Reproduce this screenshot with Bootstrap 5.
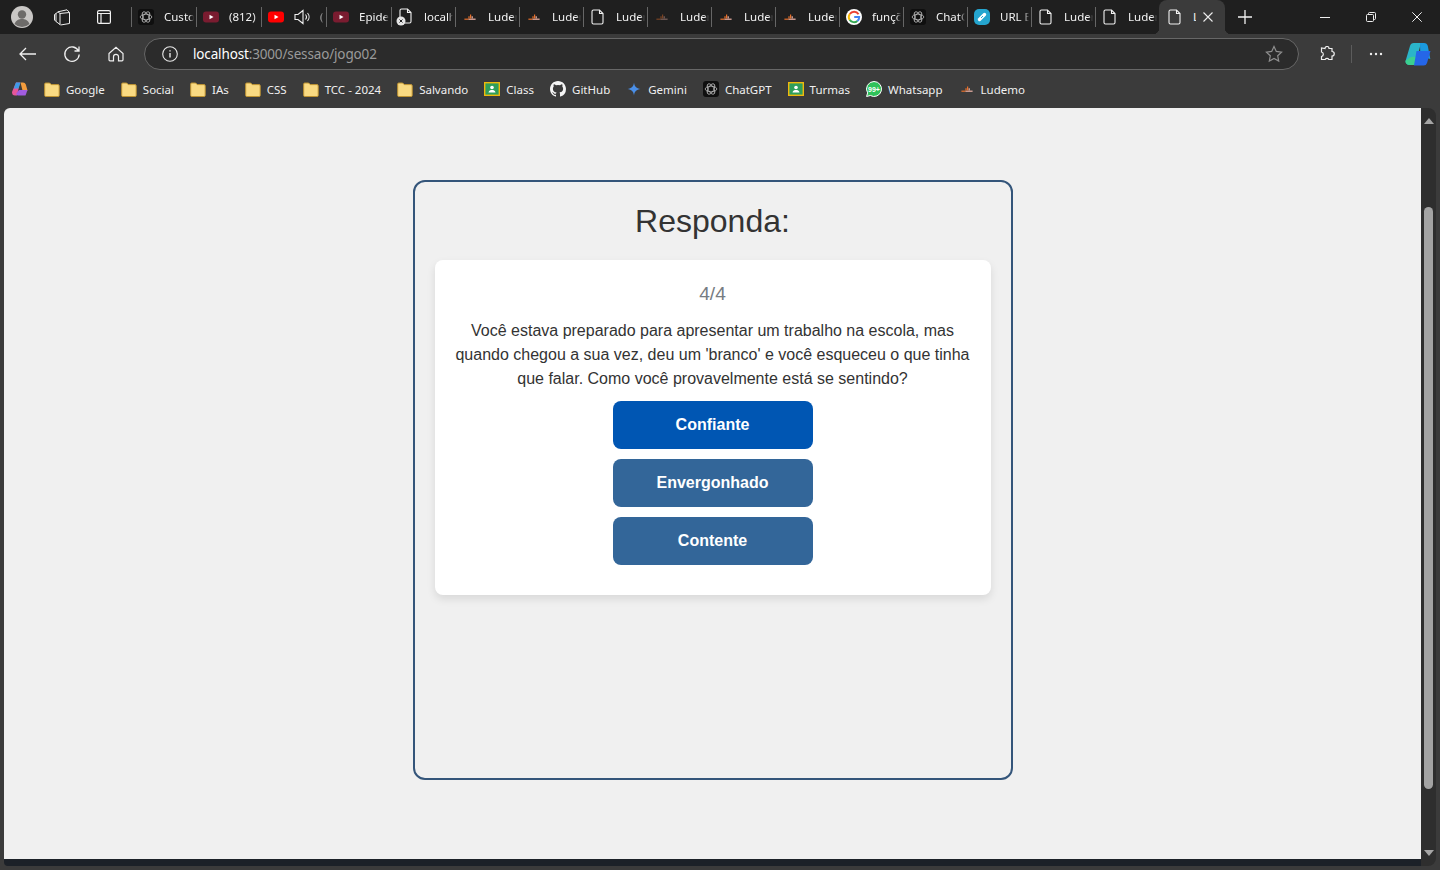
<!DOCTYPE html>
<html lang="pt-BR">
<head>
<meta charset="UTF-8">
<meta name="viewport" content="width=device-width, initial-scale=1.0">
<link href="https://cdn.jsdelivr.net/npm/bootstrap@5.3.3/dist/css/bootstrap.min.css" rel="stylesheet">
<title>localhost:3000/sessao/jogo02</title>
<style>
  html, body { height: 100%; }
  body { background: #3b3b3b; overflow: hidden; font-family: "Liberation Sans", Arial, sans-serif; }
  .uiwrap { height: 870px; }

  /* browser chrome */
  .tabstrip { height: 34px; background: #1f1f1f; color: #f2f2f2; font: 11.5px "Noto Sans", sans-serif; }
  .ctl-left { width: 131px; padding-left: 11px; }
  .avatar { width: 22px; height: 22px; }
  .ic-collect { margin-left: 20px; }
  .ic-tabs { margin-left: 26px; }
  .tabcell { width: 64px; height: 34px; padding-left: 7px; padding-right: 1px; gap: 10px; border-right: 1px solid transparent; position: relative; }
  .tabcell.wide { width: 65px; }
  .tabcell::after { content: ""; position: absolute; right: -2px; top: 7px; height: 20px; width: 1px; background: #666; }
  .tabcell.first::before { content: ""; position: absolute; left: 0; top: 7px; height: 20px; width: 1px; background: #666; }
  .tabcell.noline::after { display: none; }
  .tabcell svg { flex: none; }
  .tabname { overflow: hidden; white-space: nowrap; min-width: 0; flex: 1 1 0; padding-bottom: 2px; -webkit-mask-image: linear-gradient(to right, #000 calc(100% - 5px), transparent); mask-image: linear-gradient(to right, #000 calc(100% - 5px), transparent); }
  .ic-badged { margin-left: -2px; }
  .tabcell-on { width: 66px; height: 34px; background: #3b3b3b; border-radius: 8px 8px 0 0; padding-left: 8px; gap: 10px; position: relative; }
  .tabcell-on::before, .tabcell-on::after { content: ""; position: absolute; bottom: 0; width: 6px; height: 6px; }
  .tabcell-on::before { left: -6px; background: radial-gradient(circle at 0 0, transparent 6px, #3b3b3b 6.500px); }
  .tabcell-on::after { right: -6px; background: radial-gradient(circle at 100% 0, transparent 6px, #3b3b3b 6.500px); }
  .tab-cut { width: 3px; overflow: hidden; padding-bottom: 2px; }
  .ic-close { margin-left: -3px; }
  .ic-plus { margin-left: 13px; }
  .winctl { width: 46px; }

  .toolbar { height: 38px; padding-top: 2px; background: #3b3b3b; }
  .navbtn { width: 44px; }
  .navbtn.lead-btn { margin-left: 6px; }
  .addr { height: 32px; width: 1155px; margin-left: 6px; background: #2b2b2b; border: 1px solid #676767; border-radius: 16px; padding: 0 15px 0 17px; font: 13.5px "Noto Sans", sans-serif; letter-spacing: -.15px; color: #9a9a9a; }
  .addr b { font-weight: 400; color: #fff; }
  .addr-url { margin-left: 15px; }
  .ic-ext { margin-left: 20px; }
  .tool-sep { width: 1px; height: 18px; margin-left: 16px; background: #5c5c5c; }
  .ic-dots { margin-left: 17px; }
  .ic-copilot { margin-left: 22px; }

  .bookbar { height: 36px; background: #3b3b3b; padding: 0 0 2px 12px; gap: 16px; color: #f0f0f0; font: 11.5px "Noto Sans", sans-serif; }
  .bookmk { gap: 6px; white-space: nowrap; }

  /* viewport */
  .vwrap { height: 758px; }
  .pagearea { width: 1417px; height: 751px; margin-left: 4px; background: #f0f0f0; border-top-left-radius: 6px; overflow: hidden; }
  .sbar { width: 15px; height: 758px; background: #2e2e2e; padding: 10px 0; border-radius: 0 8px 8px 0; }
  .sbar-arrow-up { width: 0; height: 0; border-left: 5px solid transparent; border-right: 5px solid transparent; border-bottom: 6px solid #a6a6a6; }
  .sbar-arrow-dn { width: 0; height: 0; border-left: 5px solid transparent; border-right: 5px solid transparent; border-top: 6px solid #a6a6a6; }
  .sbar-thumb { width: 9px; height: 582px; margin-top: 83px; margin-bottom: auto; background: #a3a3a3; border-radius: 5px; }
  .pagefoot { height: 7px; width: 1417px; margin-left: 4px; background: #1c2128; border-bottom-left-radius: 4px; }

  /* quiz */
  .jogo-box { width: 600px; height: 600px; margin: 72px 0 0 409px; border: 2px solid #34557a; border-radius: 12px; padding: 20px; color: #333; }
  .jogo-title { font-size: 32px; font-weight: 400; line-height: 38px; margin: 0 0 20px; padding-right: 1px; }
  .jogo-card { height: 335px; padding: 20px 21px 20px 20px; background: #fff; border: 0; border-radius: 8px; box-shadow: 0 4px 8px rgba(0,0,0,.1); }
  .jogo-count { font-size: 19.2px; line-height: 26px; padding-top: 1px; color: #777c82; margin-bottom: 12px; }
  .jogo-text { font-size: 16px; line-height: 24px; margin-bottom: 10px; }
  .resp-list { gap: 10px; margin-right: -1px; }
  .resp-btn { width: 200px; height: 48px; padding: 0 1px 0 0; border: 0; border-radius: 8px; color: #fff; font-size: 16px; font-weight: 700; background: #336699; }
  .resp-btn:hover { background: #336699; color: #fff; }
  .resp-btn.ativo, .resp-btn.ativo:hover { background: #0056b3; }
</style>
</head>
<body>
<svg width="0" height="0" class="d-block">
  <defs>
    <symbol id="i-file" viewBox="0 0 16 16"><path d="M3.500 1h6l3.500 3.500v9a1.500 1.500 0 0 1-1.500 1.500h-8a1.500 1.500 0 0 1-1.500-1.500v-11a1.500 1.500 0 0 1 1.500-1.500zM9.500 1v3.500h3.500" fill="none" stroke="#f2f2f2" stroke-width="1.100"/></symbol>
    <symbol id="i-folder" viewBox="0 0 16 16"><path d="M.7 3a1 1 0 0 1 1-1h4l1.500 1.600h6.800a1.200 1.200 0 0 1 1.200 1.200v9.700a1 1 0 0 1-1 1h-12.500a1 1 0 0 1-1-1z" fill="#f9da82" stroke="#bd9230"/></symbol>
    <symbol id="i-ludemo" viewBox="-2 -2 20 20"><path d="M1 10h5v1.500H1z" fill="#e8702a"/><path d="M6 10h9v1.500H6z" fill="#efb4a8"/><path d="M6 7h1.500v3H6zM8 5h1.500v5H8z" fill="#e8702a"/><path d="M10 7h1.500v3H10z" fill="#efb4a8"/></symbol>
    <symbol id="i-yt" viewBox="0 0 16 16"><rect y="2.500" width="16" height="11" rx="3" fill="currentColor"/><path d="M6.500 5.700v4.600L10.500 8z" fill="#fff"/></symbol>
    <symbol id="i-gpt" viewBox="0 0 16 16"><rect width="16" height="16" rx="3" fill="#0f0f0f"/><g fill="none" stroke="#bdbdbd" stroke-width=".8"><ellipse cx="8" cy="8" rx="5.800" ry="2.800"/><ellipse cx="8" cy="8" rx="5.800" ry="2.800" transform="rotate(60 8 8)"/><ellipse cx="8" cy="8" rx="5.800" ry="2.800" transform="rotate(120 8 8)"/></g></symbol>
    <symbol id="i-class" viewBox="0 0 16 16"><rect x=".7" y="1.700" width="14.600" height="12.600" fill="#2f9e5b" stroke="#f0b90b" stroke-width="1.400"/><circle cx="8" cy="6.500" r="1.800" fill="#fff"/><path d="M4.500 11.500c.4-2 2-2.500 3.500-2.500s3.100.5 3.500 2.500z" fill="#fff"/></symbol>
    <symbol id="i-copilot" viewBox="0 0 16 16"><path d="M4 1.500h4l-3 13H3a3 3 0 0 1-2.800-4z" fill="#e7569a"/><path d="M4 1.500h4.500l-2 6H1.800z" fill="#3d9be8"/><path d="M8.500 1.500H11a3 3 0 0 1 2.800 2l1.700 6h-5z" fill="#f39c3d"/><path d="M7 9h8.500l-2 5.500H6a2 2 0 0 1-1.800-2z" fill="#a25ce0"/></symbol>
  </defs>
</svg>

<div class="uiwrap d-flex flex-column">

  <!-- tabs -->
  <div class="tabstrip d-flex align-items-center">
    <div class="ctl-left d-flex align-items-center">
      <svg class="avatar" viewBox="0 0 22 22"><circle cx="11" cy="11" r="11" fill="#c9c7c5"/><circle cx="11" cy="8.500" r="4.200" fill="#6d6b69"/><path d="M3.500 18c1.500-4 4.500-5 7.500-5s6 1 7.500 5a11 11 0 0 1-15 0z" fill="#6d6b69"/></svg>
      <svg class="ic-collect" width="18" height="18" viewBox="0 0 18 18" fill="none" stroke="#ededed" stroke-width="1"><path d="M7 5.500l9.500-1v11l-9 1.500-.5-.5z"/><path d="M7 5.500L5 3.800l9-2 2.500 2.700"/><path d="M5 3.800L3 5.500v8l4 3"/><path d="M3 5.500L1.500 6.500v5.500l1.500 1.500"/></svg>
      <svg class="ic-tabs" width="14" height="14" viewBox="0 0 14 14" fill="none" stroke="#f2f2f2" stroke-width="1.200"><rect x=".6" y=".6" width="12.800" height="12.800" rx="1.500"/><path d="M.6 3.500h12.800M4 3.500v9.900"/></svg>
    </div>
    <div class="tabcell wide first d-flex align-items-center"><svg width="16" height="16"><use href="#i-gpt"/></svg><span class="tabname">Custom GPT</span></div>
    <div class="tabcell wide d-flex align-items-center"><svg width="16" height="16" color="#7a1c30"><use href="#i-yt"/></svg><span class="tabname">(812) O melhor</span></div>
    <div class="tabcell wide d-flex align-items-center"><svg width="16" height="16" color="#f00"><use href="#i-yt"/></svg><svg width="16" height="16" viewBox="0 0 16 16" fill="none" stroke="#f0f0f0" stroke-width="1.100"><path d="M1 5.500h3l5-4v13l-5-4H1zM11.500 5.500a4 4 0 0 1 0 5M13.500 4a6 6 0 0 1 0 8"/></svg><span class="tabname">(812)</span></div>
    <div class="tabcell wide d-flex align-items-center"><svg width="16" height="16" color="#7a1c30"><use href="#i-yt"/></svg><span class="tabname">Epidemia</span></div>
    <div class="tabcell d-flex align-items-center"><svg class="ic-badged" width="18" height="18" viewBox="0 0 18 18"><use href="#i-file" width="16" height="16" x="2" y="0"/><circle cx="5" cy="13" r="4.500" fill="#e6e6e6"/><path d="M3.500 11.500l3 3m0-3l-3 3" stroke="#222" stroke-width="1"/></svg><span class="tabname">localhost</span></div>
    <div class="tabcell d-flex align-items-center"><svg width="16" height="16"><use href="#i-ludemo"/></svg><span class="tabname">Ludemo</span></div>
    <div class="tabcell d-flex align-items-center"><svg width="16" height="16"><use href="#i-ludemo"/></svg><span class="tabname">Ludemo</span></div>
    <div class="tabcell d-flex align-items-center"><svg width="16" height="16"><use href="#i-file"/></svg><span class="tabname">Ludemo</span></div>
    <div class="tabcell d-flex align-items-center"><svg width="16" height="16" opacity=".45"><use href="#i-ludemo"/></svg><span class="tabname">Ludemo</span></div>
    <div class="tabcell d-flex align-items-center"><svg width="16" height="16"><use href="#i-ludemo"/></svg><span class="tabname">Ludemo</span></div>
    <div class="tabcell d-flex align-items-center"><svg width="16" height="16"><use href="#i-ludemo"/></svg><span class="tabname">Ludemo</span></div>
    <div class="tabcell d-flex align-items-center"><svg width="16" height="16" viewBox="0 0 16 16"><circle cx="8" cy="8" r="8" fill="#fff"/><path d="M12.500 5.200A5.200 5.200 0 0 0 3.800 5" fill="none" stroke="#ea4335" stroke-width="2"/><path d="M3.800 5a5.200 5.200 0 0 0-.1 5.900" fill="none" stroke="#fbbc05" stroke-width="2"/><path d="M3.700 10.900a5.200 5.200 0 0 0 7.700 1" fill="none" stroke="#34a853" stroke-width="2"/><path d="M11.400 11.900A5 5 0 0 0 13.200 8H8.200" fill="none" stroke="#4285f4" stroke-width="2"/></svg><span class="tabname">funções</span></div>
    <div class="tabcell d-flex align-items-center"><svg width="16" height="16"><use href="#i-gpt"/></svg><span class="tabname">ChatGPT</span></div>
    <div class="tabcell d-flex align-items-center"><svg width="16" height="16" viewBox="0 0 16 16"><rect width="16" height="16" rx="5" fill="#25a5cf"/><path d="M5.500 10.500l5-5" stroke="#fff" stroke-width="3.400" stroke-linecap="round"/><path d="M7 9l2-2" stroke="#25a5cf" stroke-width="1"/></svg><span class="tabname">URL Encode</span></div>
    <div class="tabcell d-flex align-items-center"><svg width="16" height="16"><use href="#i-file"/></svg><span class="tabname">Ludemo</span></div>
    <div class="tabcell noline d-flex align-items-center"><svg width="16" height="16"><use href="#i-file"/></svg><span class="tabname">Ludemo</span></div>
    <div class="tabcell-on d-flex align-items-center">
      <svg width="16" height="16"><use href="#i-file"/></svg>
      <span class="tab-cut">L</span>
      <svg class="ic-close" width="10" height="10" viewBox="0 0 10 10" stroke="#ededed" stroke-width="1.100"><path d="M.5.500l9 9m0-9l-9 9"/></svg>
    </div>
    <svg class="ic-plus" width="14" height="14" viewBox="0 0 14 14" stroke="#f2f2f2" stroke-width="1.300"><path d="M7 0v14M0 7h14"/></svg>
    <div class="ms-auto d-flex">
      <div class="winctl d-flex justify-content-center align-items-center"><svg width="10" height="10" viewBox="0 0 10 10" stroke="#eee"><path d="M0 5.500h10"/></svg></div>
      <div class="winctl d-flex justify-content-center align-items-center"><svg width="10" height="10" viewBox="0 0 10 10" fill="none" stroke="#eee"><rect x=".5" y="2.500" width="7" height="7" rx="1"/><path d="M2.500 2.500v-1a1 1 0 0 1 1-1h5a1 1 0 0 1 1 1v5a1 1 0 0 1-1 1h-1"/></svg></div>
      <div class="winctl d-flex justify-content-center align-items-center"><svg width="10" height="10" viewBox="0 0 10 10" stroke="#eee"><path d="M.3.300l9.400 9.400m0-9.400L.3 9.700"/></svg></div>
    </div>
  </div>

  <!-- address row -->
  <div class="toolbar d-flex align-items-center">
    <div class="navbtn lead-btn d-flex justify-content-center"><svg width="18" height="14" viewBox="0 0 18 14" fill="none" stroke="#f0f0f0" stroke-width="1.300"><path d="M17 7H1M7 1L1 7l6 6"/></svg></div>
    <div class="navbtn d-flex justify-content-center"><svg width="18" height="18" viewBox="0 0 18 18" fill="none" stroke="#f0f0f0" stroke-width="1.300"><path d="M15.500 6A7.200 7.200 0 1 0 16.200 9.500M16 1.500V6h-4.500"/></svg></div>
    <div class="navbtn d-flex justify-content-center"><svg width="16" height="16" viewBox="0 0 16 16" fill="none" stroke="#f0f0f0" stroke-width="1.200"><path d="M1 7.500L8 1.200l7 6.300v6.300a1 1 0 0 1-1 1h-3.500v-4a2.500 2.500 0 0 0-5 0v4H2a1 1 0 0 1-1-1z"/></svg></div>
    <div class="addr d-flex align-items-center">
      <svg width="16" height="16" viewBox="0 0 16 16" fill="none" stroke="#e8e8e8" stroke-width="1.100"><circle cx="8" cy="8" r="7.300"/><path d="M8 7v4.500M8 4.200v1.300" stroke-width="1.400"/></svg>
      <span class="addr-url flex-grow-1"><b>localhost</b>:3000/sessao/jogo02</span>
      <svg width="18" height="18" viewBox="0 0 18 18" fill="none" stroke="#8f8f8f" stroke-width="1.200"><path d="M9 1.500l2.300 4.900 5.300.7-3.900 3.700 1 5.300L9 13.500l-4.700 2.600 1-5.300-3.900-3.700 5.300-.7z"/></svg>
    </div>
    <svg class="ic-ext" width="16" height="16" viewBox="0 0 16 16" fill="none" stroke="#f0f0f0" stroke-width="1.200"><path d="M6 2.500a2 2 0 0 1 4 0h3v3a2 2 0 0 1 0 4.500v3.500h-3.200a2 2 0 0 0-3.600 0H2.500v-3a2.300 2.300 0 0 0 0-4.500v-4z"/></svg>
    <div class="tool-sep"></div>
    <svg class="ic-dots" width="14" height="4" viewBox="0 0 14 4" fill="#f0f0f0"><circle cx="2" cy="2" r="1.200"/><circle cx="7" cy="2" r="1.200"/><circle cx="12" cy="2" r="1.200"/></svg>
    <svg class="ic-copilot" width="26" height="24" viewBox="0 0 26 24"><path d="M9 1h7l-6 22H4a3.500 3.500 0 0 1-3.300-4.500L5 4a4 4 0 0 1 4-3z" fill="#2bb5c9"/><path d="M3 17c3-3 6-2 8.500-2l-2 8H4a3.500 3.500 0 0 1-3.300-4.500z" fill="#3bd08f"/><path d="M15 1h4a4 4 0 0 1 3.800 3l2.500 13-10-3z" fill="#1b9ae0"/><path d="M11.500 9h14l-3.500 12a3.500 3.500 0 0 1-3.500 2.500H9z" fill="#2566e8"/></svg>
  </div>

  <!-- favorites -->
  <div class="bookbar d-flex align-items-center">
    <div class="bookmk d-flex align-items-center"><svg width="16" height="16"><use href="#i-copilot"/></svg></div>
    <div class="bookmk d-flex align-items-center"><svg width="16" height="16"><use href="#i-folder"/></svg>Google</div>
    <div class="bookmk d-flex align-items-center"><svg width="16" height="16"><use href="#i-folder"/></svg>Social</div>
    <div class="bookmk d-flex align-items-center"><svg width="16" height="16"><use href="#i-folder"/></svg>IAs</div>
    <div class="bookmk d-flex align-items-center"><svg width="16" height="16"><use href="#i-folder"/></svg>CSS</div>
    <div class="bookmk d-flex align-items-center"><svg width="16" height="16"><use href="#i-folder"/></svg>TCC - 2024</div>
    <div class="bookmk d-flex align-items-center"><svg width="16" height="16"><use href="#i-folder"/></svg>Salvando</div>
    <div class="bookmk d-flex align-items-center"><svg width="16" height="16"><use href="#i-class"/></svg>Class</div>
    <div class="bookmk d-flex align-items-center"><svg width="16" height="16" viewBox="0 0 16 16" fill="#f5f5f5"><path d="M8 0C3.580 0 0 3.580 0 8c0 3.540 2.290 6.530 5.470 7.590.4.070.55-.17.55-.38v-1.340c-2.230.48-2.700-1.070-2.700-1.070-.36-.92-.89-1.170-.89-1.170-.73-.5.060-.49.060-.49.800.06 1.220.82 1.220.82.710 1.220 1.870.87 2.330.66.070-.52.280-.87.510-1.070-1.780-.2-3.640-.89-3.640-3.950 0-.87.310-1.590.820-2.150-.08-.2-.36-1.020.08-2.120 0 0 .67-.21 2.200.82a7.600 7.600 0 0 1 4 0c1.530-1.040 2.200-.82 2.200-.82.440 1.100.16 1.920.08 2.120.51.560.82 1.270.82 2.150 0 3.070-1.870 3.750-3.650 3.950.29.250.54.730.54 1.480v2.190c0 .21.150.46.550.38A8 8 0 0 0 16 8c0-4.420-3.580-8-8-8z"/></svg>GitHub</div>
    <div class="bookmk d-flex align-items-center"><svg width="16" height="16" viewBox="0 0 16 16"><path d="M8 1.500C8.500 5.500 10.500 7.500 14.500 8 10.500 8.500 8.500 10.500 8 14.500 7.500 10.500 5.500 8.500 1.500 8 5.500 7.500 7.500 5.500 8 1.500z" fill="#4a8fe8"/></svg>Gemini</div>
    <div class="bookmk d-flex align-items-center"><svg width="16" height="16"><use href="#i-gpt"/></svg>ChatGPT</div>
    <div class="bookmk d-flex align-items-center"><svg width="16" height="16"><use href="#i-class"/></svg>Turmas</div>
    <div class="bookmk d-flex align-items-center"><svg width="16" height="16" viewBox="0 0 16 16"><path d="M8 .5a7.500 7.500 0 0 0-6.400 11.400L.6 15.500l3.700-1A7.500 7.500 0 1 0 8 .5z" fill="#2fc25a" stroke="#fff"/><text x="8" y="10.500" text-anchor="middle" font-size="7" font-weight="700" fill="#fff" font-family="Liberation Sans, sans-serif">99+</text></svg>Whatsapp</div>
    <div class="bookmk d-flex align-items-center"><svg width="16" height="16"><use href="#i-ludemo"/></svg>Ludemo</div>
  </div>

  <!-- page + scrollbar -->
  <div class="vwrap d-flex">
    <div class="d-flex flex-column">
      <main class="pagearea">
        <section class="jogo-box text-center">
          <h1 class="jogo-title">Responda:</h1>
          <div class="card jogo-card align-items-center">
            <div class="jogo-count">4/4</div>
            <p class="jogo-text">Você estava preparado para apresentar um trabalho na escola, mas quando chegou a sua vez, deu um 'branco' e você esqueceu o que tinha que falar. Como você provavelmente está se sentindo?</p>
            <div class="resp-list d-flex flex-column align-items-center">
              <button type="button" class="btn resp-btn ativo">Confiante</button>
              <button type="button" class="btn resp-btn">Envergonhado</button>
              <button type="button" class="btn resp-btn">Contente</button>
            </div>
          </div>
        </section>
      </main>
      <div class="pagefoot"></div>
    </div>
    <div class="sbar d-flex flex-column align-items-center">
      <div class="sbar-arrow-up"></div>
      <div class="sbar-thumb"></div>
      <div class="sbar-arrow-dn"></div>
    </div>
  </div>
</div>
<script src="https://cdn.jsdelivr.net/npm/bootstrap@5.3.3/dist/js/bootstrap.bundle.min.js"></script>
</body>
</html>
